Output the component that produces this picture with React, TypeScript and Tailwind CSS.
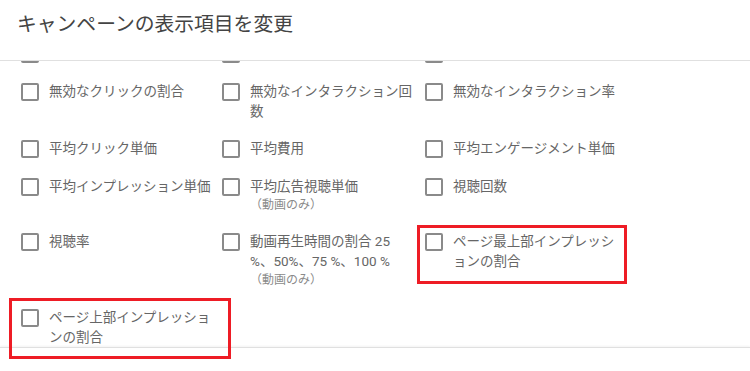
import React from "react";

type Item = { label: string; sub?: string };

const items: Item[] = [
  { label: "無効なクリック" },
  { label: "無効なインタラクション" },
  { label: "無効なクリック率" },
  { label: "無効なクリックの割合" },
  { label: "無効なインタラクション回数" },
  { label: "無効なインタラクション率" },
  { label: "平均クリック単価" },
  { label: "平均費用" },
  { label: "平均エンゲージメント単価" },
  { label: "平均インプレッション単価" },
  { label: "平均広告視聴単価", sub: "（動画のみ）" },
  { label: "視聴回数" },
  { label: "視聴率" },
  { label: "動画再生時間の割合 25 %、50%、75 %、100 %", sub: "（動画のみ）" },
  { label: "ページ最上部インプレッションの割合" },
  { label: "ページ上部インプレッションの割合" },
];

function Row({ item }: { item: Item }) {
  return (
    <div className="flex items-start gap-[10px]">
      <div className="mt-[2px] h-[18px] w-[18px] shrink-0 rounded-[2px] border-2 border-[#8a8a8a]" />
      <div className="w-[166px]">
        <div className="text-[13.5px] leading-[20px] text-[#666666]">{item.label}</div>
        {item.sub && (
          <div className="text-[12px] leading-[18px] text-[#8a8a8a]">{item.sub}</div>
        )}
      </div>
    </div>
  );
}

export default function App() {
  return (
    <div
      className="relative h-[371px] w-[750px] overflow-hidden bg-white"
      style={{ fontFamily: 'Roboto, "Noto Sans CJK JP", "Noto Sans", sans-serif' }}
    >
      <div className="h-[61px] border-b border-[#e0e0e0] px-[17px] pt-[11px]">
        <h1 className="text-[19.8px] font-normal leading-[28px] text-[#444444]">
          キャンペーンの表示項目を変更
        </h1>
      </div>
      <div className="h-[286px] overflow-hidden">
        <div className="mt-[-18px] grid grid-cols-[201px_203px_202px] gap-y-[17.5px] pl-[21px]">
          {items.map((it, i) => (
            <Row key={i} item={it} />
          ))}
        </div>
      </div>
      <div className="h-[24px] border-t border-[#e0e0e0] shadow-[0_-1px_2px_rgba(0,0,0,0.05)]" />
      <div className="pointer-events-none absolute left-[417px] top-[225px] h-[59px] w-[210px] border-[3px] border-[#ee1c25]" />
      <div className="pointer-events-none absolute left-[9px] top-[298px] h-[61px] w-[222px] border-[3px] border-[#ee1c25]" />
    </div>
  );
}
